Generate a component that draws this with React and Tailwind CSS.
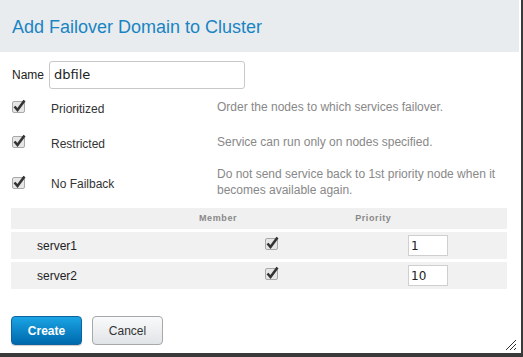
import React from 'react';

function Check({ className = '' }) {
  return (
    <svg width="16" height="15" viewBox="0 0 16 15" className={className}>
      <rect x="1.5" y="2.5" width="12" height="11" rx="1.5" fill="#e6e6e6" stroke="#a9a9a9" />
      <path d="M3.5 7.5 L6.5 11 L13.5 1.5" fill="none" stroke="#333" strokeWidth="2.6" strokeLinejoin="miter" />
    </svg>
  );
}

const options = [
  { label: 'Prioritized', desc: ['Order the nodes to which services failover.'], h: 'h-[35px]' },
  { label: 'Restricted', desc: ['Service can run only on nodes specified.'], h: 'h-[35px]' },
  { label: 'No Failback', desc: ['Do not send service back to 1st priority node when it', 'becomes available again.'], h: 'h-[46px]' },
];

const servers = [
  { name: 'server1', prio: '1' },
  { name: 'server2', prio: '10' },
];

export default function App() {
  return (
    <div className="w-[523px] h-[357px] bg-[#3a3a3a] overflow-hidden" style={{ fontFamily: '"Liberation Sans", Arial, sans-serif' }}>
      <div className="w-[521px] h-[353px] bg-white relative">
        <div className="w-[519px] h-[52px] bg-[#e8ecef] flex items-center pl-[12px]">
          <h1 className="text-[18px] text-[#1a84c3] leading-[24px] mt-[1px]">Add Failover Domain to Cluster</h1>
        </div>

        <div className="flex items-center mt-[9px] pl-[12px]">
          <span className="text-[12px] text-[#222] mr-[5px]">Name</span>
          <div className="w-[196px] h-[28px] border border-[#c8c8c8] rounded-[3px] flex items-center pl-[4px] text-[13px] text-[#222]" style={{ fontFamily: '"DejaVu Sans", sans-serif' }}>dbfile</div>
        </div>

        <div className="mt-[2px]">
          {options.map((o) => (
            <div key={o.label} className={`flex items-center ${o.h}`}>
              <Check className="ml-[11px] -mt-[4px]" />
              <span className="ml-[24px] w-[166px] text-[12px] text-[#333]">{o.label}</span>
              <div className="text-[12px] text-[#888] leading-[16px] -mt-[4px]">
                {o.desc.map((d) => <div key={d}>{d}</div>)}
              </div>
            </div>
          ))}
        </div>

        <div className="ml-[11px] w-[496px] mt-[1px] flex flex-col gap-[3px]">
          <div className="h-[21px] bg-[#f0f0f0] flex items-center text-[9px] font-bold text-[#888] tracking-[0.6px]">
            <span className="ml-[188px]">Member</span>
            <span className="ml-[118px]">Priority</span>
          </div>
          {servers.map((s) => (
            <div key={s.name} className="h-[27px] bg-[#f1f1f1] flex items-center">
              <span className="ml-[26px] w-[227px] text-[12px] text-[#222]">{s.name}</span>
              <Check className="-mt-[4px]" />
              <div className="ml-[128px] w-[40px] h-[21px] bg-white border border-[#cfcfcf] flex items-center pl-[2px] text-[12px] text-[#222]" style={{ fontFamily: '"DejaVu Sans", sans-serif' }}>{s.prio}</div>
            </div>
          ))}
        </div>

        <div className="flex gap-[10px] ml-[11px] mt-[27px]">
          <button className="w-[71px] h-[29px] rounded-[4px] border border-[#0b63a0] bg-gradient-to-b from-[#1ba4e4] to-[#0069ad] text-white font-bold text-[12px] shadow-[0_1px_1px_rgba(0,0,0,0.2)]">Create</button>
          <button className="w-[71px] h-[29px] rounded-[4px] border border-[#a8a8a8] bg-gradient-to-b from-[#f9fafb] to-[#e1e4e7] text-[#333] text-[12px]">Cancel</button>
        </div>

        <svg width="12" height="12" viewBox="0 0 12 12" className="absolute right-[4px] bottom-[2px]">
          <path d="M11 1 L1 11 M11 5 L5 11 M11 9 L9 11" stroke="#333" strokeWidth="1" />
        </svg>
      </div>
    </div>
  );
}
